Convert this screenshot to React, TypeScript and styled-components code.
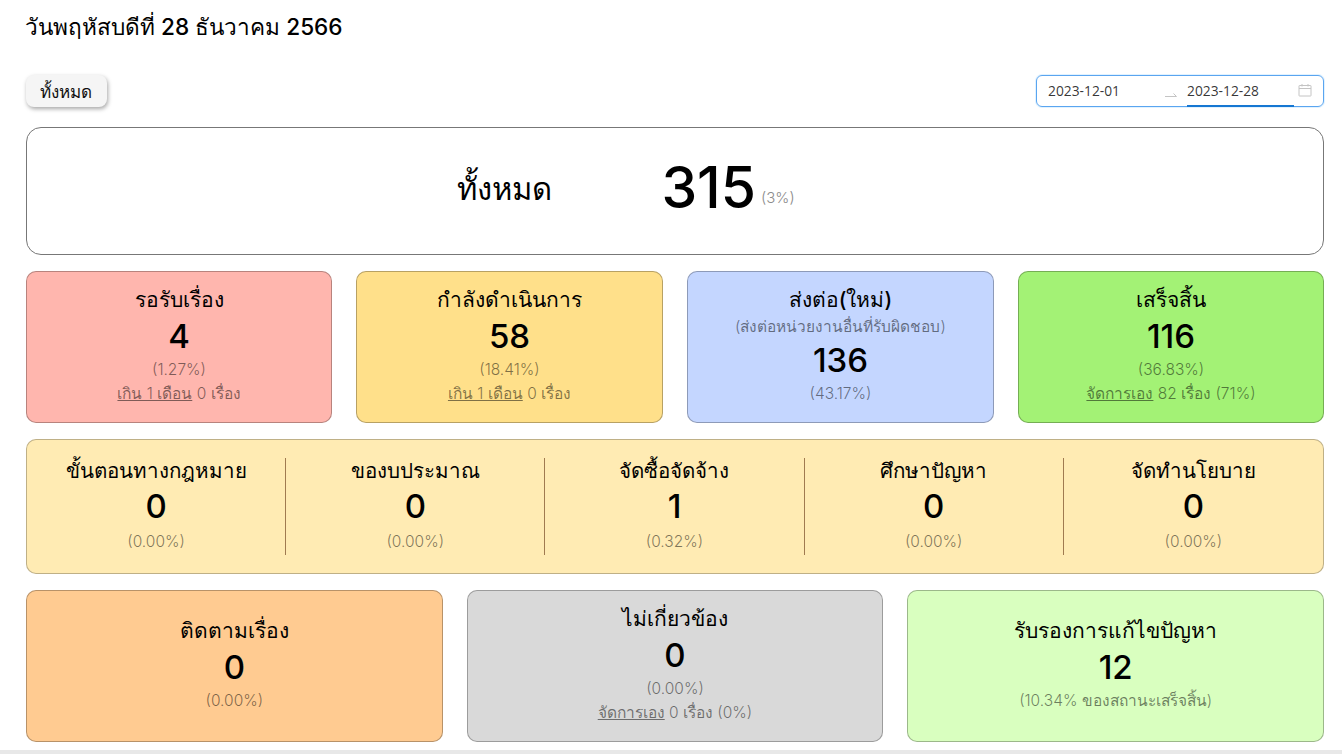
import React from "react";
import styled, { createGlobalStyle } from "styled-components";

const GlobalStyle = createGlobalStyle`
    html, body {
        margin: 0;
        padding: 0;
        background: #fff;
        overflow: hidden;
    }
    body {
        font-family: Inter, "Noto Sans", "Open Sans", "DejaVu Sans", sans-serif;
        color: #000;
    }
`;

const Page = styled.div`
    display: flex;
    flex-direction: column;
    width: 1342px;
    height: 754px;
    box-sizing: border-box;
    padding: 0 18px 0 26px;
    overflow: hidden;
`;

const DateTitle = styled.div`
    height: 75px;
    padding-top: 11px;
    margin-left: -1px;
    box-sizing: border-box;
    font-size: 22.6px;
    line-height: 32px;
    font-weight: 500;
`;

const Toolbar = styled.div`
    display: flex;
    justify-content: space-between;
    align-items: flex-start;
    height: 52px;
`;

const FilterButton = styled.button`
    width: 81px;
    height: 32px;
    padding: 0 1px 0 0;
    border: none;
    border-radius: 8px;
    background: #f5f5f5;
    box-shadow: 1px 2px 4px rgba(0, 0, 0, 0.35);
    font-family: inherit;
    font-size: 17px;
    font-weight: 500;
    color: #111;
`;

const RangePicker = styled.div`
    display: flex;
    align-items: flex-start;
    width: 288px;
    height: 32px;
    box-sizing: border-box;
    padding: 0 11px;
    border: 1px solid #5aa5f0;
    border-radius: 6px;
    box-shadow: 0 0 0 1px rgba(5, 145, 255, 0.12);
`;

const RangeDate = styled.div<{ $active?: boolean }>`
    width: ${(p) => (p.$active ? "107px" : "116px")};
    height: 29px;
    font-family: "Open Sans", sans-serif;
    font-size: 13.8px;
    line-height: 29px;
    color: rgba(0, 0, 0, 0.8);
    border-bottom: 2px solid ${(p) => (p.$active ? "#1677d2" : "transparent")};
`;

const RangeArrow = styled.div`
    display: flex;
    width: 23px;
    padding-top: 14px;
`;

const CalendarIcon = styled.div`
    display: flex;
    margin: 7px 0 0 auto;
`;

const Summary = styled.div`
    display: flex;
    align-items: center;
    justify-content: center;
    height: 128px;
    box-sizing: border-box;
    border: 1px solid #777;
    border-radius: 15px;
    padding: 0 98px 8px 0;
`;

const SummaryLabel = styled.div`
    width: 204px;
    font-size: 31px;
    font-weight: 500;
    line-height: 44px;
    padding-top: 4px;
`;

const SummaryValue = styled.div`
    font-size: 57px;
    font-weight: 500;
    line-height: 70px;
    padding-top: 2px;
`;

const SummaryPercent = styled.div`
    margin: 20px 0 0 5px;
    font-size: 15px;
    font-weight: 300;
    color: #8c8c8c;
`;

const CardRow = styled.div<{ $columns: string }>`
    display: grid;
    grid-template-columns: ${(p) => p.$columns};
    column-gap: 24px;
    margin-top: 16px;
    height: 152px;
`;

const Card = styled.div<{ $bg: string }>`
    display: flex;
    flex-direction: column;
    align-items: center;
    justify-content: center;
    box-sizing: border-box;
    padding-bottom: 3px;
    border: 1px solid rgba(0, 0, 0, 0.28);
    border-radius: 10px;
    background: ${(p) => p.$bg};
    text-align: center;
`;

const CardTitle = styled.div`
    font-size: 21px;
    line-height: 30px;
    font-weight: 500;
`;

const CardValue = styled.div`
    margin-bottom: 1px;
    font-size: 33px;
    line-height: 42px;
    font-weight: 500;
`;

const CardNote = styled.div`
    font-size: 15.5px;
    line-height: 24px;
    font-weight: 300;
    color: rgba(0, 0, 0, 0.5);
`;

const NoteLink = styled.span`
    text-decoration: underline;
`;

const CategoryCard = styled.div`
    display: grid;
    grid-template-columns: repeat(5, 1fr);
    margin-top: 16px;
    height: 135px;
    box-sizing: border-box;
    padding: 18px 0 19px;
    border: 1px solid rgba(0, 0, 0, 0.25);
    border-radius: 10px;
    background: #ffebb3;
`;

const CategoryCell = styled.div<{ $divided: boolean }>`
    display: flex;
    flex-direction: column;
    align-items: center;
    height: 97px;
    text-align: center;
    border-right: ${(p) => (p.$divided ? "1px solid #a07a50" : "none")};
`;

const CategoryTitle = styled(CardTitle)`
    margin-top: -2px;
    font-size: 20.5px;
`;

const CategoryValue = styled(CardValue)`
    margin: -1px 0 3px;
`;

const BottomStrip = styled.div`
    margin: 8px -18px 0 -26px;
    height: 4px;
    background: #e8e8e8;
`;

interface IStatus {
    title: string;
    value: number;
    percent: string;
    bg: string;
    subtitle?: string;
    link?: string;
    rest?: string;
}

const mainCards: IStatus[] = [
    { title: "รอรับเรื่อง", value: 4, percent: "(1.27%)", bg: "#ffb6ae", link: "เกิน 1 เดือน", rest: " 0 เรื่อง" },
    { title: "กำลังดำเนินการ", value: 58, percent: "(18.41%)", bg: "#ffe08a", link: "เกิน 1 เดือน", rest: " 0 เรื่อง" },
    { title: "ส่งต่อ(ใหม่)", subtitle: "(ส่งต่อหน่วยงานอื่นที่รับผิดชอบ)", value: 136, percent: "(43.17%)", bg: "#c4d6ff" },
    { title: "เสร็จสิ้น", value: 116, percent: "(36.83%)", bg: "#a3f275", link: "จัดการเอง", rest: " 82 เรื่อง (71%)" },
];

const categories = [
    { title: "ขั้นตอนทางกฎหมาย", value: 0, percent: "(0.00%)" },
    { title: "ของบประมาณ", value: 0, percent: "(0.00%)" },
    { title: "จัดซื้อจัดจ้าง", value: 1, percent: "(0.32%)" },
    { title: "ศึกษาปัญหา", value: 0, percent: "(0.00%)" },
    { title: "จัดทำนโยบาย", value: 0, percent: "(0.00%)" },
];

const bottomCards: IStatus[] = [
    { title: "ติดตามเรื่อง", value: 0, percent: "(0.00%)", bg: "#ffcb91" },
    { title: "ไม่เกี่ยวข้อง", value: 0, percent: "(0.00%)", bg: "#d9d9d9", link: "จัดการเอง", rest: " 0 เรื่อง (0%)" },
    { title: "รับรองการแก้ไขปัญหา", value: 12, percent: "(10.34% ของสถานะเสร็จสิ้น)", bg: "#d9ffbf" },
];

const StatusCard = ({ title, subtitle, value, percent, bg, link, rest }: IStatus) => (
    <Card $bg={bg}>
        <CardTitle>{title}</CardTitle>
        {subtitle && <CardNote>{subtitle}</CardNote>}
        <CardValue>{value}</CardValue>
        <CardNote>{percent}</CardNote>
        {link && (
            <CardNote>
                <NoteLink>{link}</NoteLink>
                {rest}
            </CardNote>
        )}
    </Card>
);

const App = () => {
    return (
        <Page>
            <GlobalStyle />
            <DateTitle>วันพฤหัสบดีที่ 28 ธันวาคม 2566</DateTitle>
            <Toolbar>
                <FilterButton>ทั้งหมด</FilterButton>
                <RangePicker>
                    <RangeDate>2023-12-01</RangeDate>
                    <RangeArrow>
                        <svg width="14" height="8" viewBox="0 0 14 8" fill="none">
                            <path d="M1 6.5H12.5L9.5 3.5" stroke="#c4c4c4" strokeWidth="1" />
                        </svg>
                    </RangeArrow>
                    <RangeDate $active>2023-12-28</RangeDate>
                    <CalendarIcon>
                        <svg width="14" height="14" viewBox="0 0 14 14" fill="none" stroke="#c4c4c4" strokeWidth="1">
                            <rect x="1" y="2.5" width="12" height="10.5" rx="0.5" />
                            <path d="M1 5.5H13M4 1V3.5M10 1V3.5" />
                        </svg>
                    </CalendarIcon>
                </RangePicker>
            </Toolbar>
            <Summary>
                <SummaryLabel>ทั้งหมด</SummaryLabel>
                <SummaryValue>315</SummaryValue>
                <SummaryPercent>(3%)</SummaryPercent>
            </Summary>
            <CardRow $columns="306px 307px 307px 306px">
                {mainCards.map((card) => (
                    <StatusCard key={card.title} {...card} />
                ))}
            </CardRow>
            <CategoryCard>
                {categories.map((item, index) => (
                    <CategoryCell key={item.title} $divided={index < categories.length - 1}>
                        <CategoryTitle>{item.title}</CategoryTitle>
                        <CategoryValue>{item.value}</CategoryValue>
                        <CardNote>{item.percent}</CardNote>
                    </CategoryCell>
                ))}
            </CategoryCard>
            <CardRow $columns="repeat(3, 1fr)">
                {bottomCards.map((card) => (
                    <StatusCard key={card.title} {...card} />
                ))}
            </CardRow>
            <BottomStrip />
        </Page>
    );
};

export default App;
